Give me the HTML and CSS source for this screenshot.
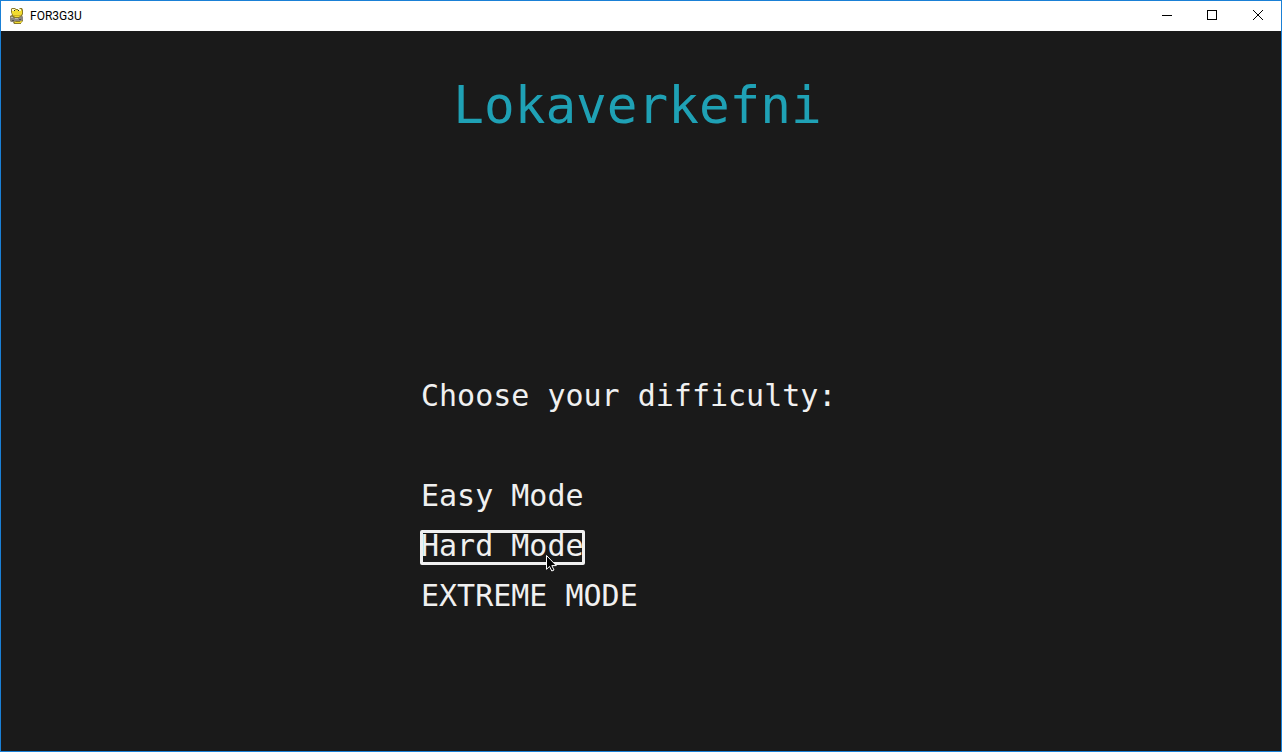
FILE: index.html
```html
<!DOCTYPE html>
<html lang="is">
<head>
<meta charset="utf-8">
<title>FOR3G3U</title>
<link rel="stylesheet" href="styles.css">
</head>
<body>
<div class="window">
  <header class="titlebar">
    <svg class="app-icon" viewBox="0 0 16 16" aria-hidden="true">
      <path fill="#8a7a2a" d="M3 0h3l1 1h3l1-1h2l1 2v4l-1 2 1 1v4l-2 2v1H5l-1-2H2l-1-2V8l2-1-1-3V1z"/>
      <path fill="#f2dc30" d="M3 1h3l1 1h3l1-1h1l1 2v3l-1 1-2 2H6L4 7 3 5zM5 13l2 1h4l1-2 1 1-1 2H6z"/>
      <path fill="#fff9c0" d="M3 1h3v2H3zM9 1h3v2H9z"/>
      <path fill="#2b2a20" d="M5 2h1v1H5zM9 2h1v1H9z"/>
      <path fill="#d3b022" d="M5 7h6v1H5z"/>
      <path fill="#8b8680" d="M1 9l2-1 2 2h5l2-2 2 1v3l-2 1H7l-3 1H2l-1-2z"/>
      <path fill="#bbb7b1" d="M2 9h2v1H2zM6 10h3v1H6z"/>
      <path fill="#55514c" d="M3 12h2v1H3zM10 11h2v1h-2z"/>
    </svg>
    <span class="caption">FOR3G3U</span>
    <div class="controls">
      <button class="control" type="button" aria-label="Minimize"><svg class="glyph" viewBox="0 0 11 11"><path d="M1 5.5h10"/></svg></button>
      <button class="control" type="button" aria-label="Maximize"><svg class="glyph" viewBox="0 0 11 11"><path d="M.5.5h9v9h-9z"/></svg></button>
      <button class="control" type="button" aria-label="Close"><svg class="glyph smooth" viewBox="0 0 11 11"><path d="M0 0l10 10M10 0L0 10"/></svg></button>
    </div>
  </header>
  <main class="screen">
    <h1 class="title">Lokaverkefni</h1>
    <section class="menu">
      <h2 class="prompt">Choose your difficulty:</h2>
      <button class="option" type="button">Easy Mode</button>
      <button class="option selected" type="button">Hard Mode
        <svg class="pointer" viewBox="0 0 12 19" aria-hidden="true"><path fill="#000" stroke="#fff" d="M.5.5v13.8l3-2.9 2.3 4.6 2.2-1-2.2-4.4h4.5z"/></svg>
      </button>
      <button class="option" type="button">EXTREME MODE</button>
    </section>
  </main>
</div>
</body>
</html>
```
FILE: styles.css
```css
* {
  box-sizing: border-box;
}

body {
  margin: 0;
}

.window {
  display: flex;
  flex-direction: column;
  min-height: 100vh;
  border: 1px solid #1a80d6;
  background: #1a1a1a;
}

.titlebar {
  display: flex;
  align-items: center;
  height: 30px;
  padding: 0 0 1px 8px;
  background: #fff;
}

.app-icon {
  width: 16px;
  height: 16px;
}

.caption {
  flex: 1;
  margin-left: 5px;
  font: 12px/16px Roboto, "Open Sans", sans-serif;
  color: #000;
}

.controls {
  display: flex;
  height: 100%;
}

.control {
  display: flex;
  align-items: center;
  justify-content: center;
  width: 46px;
  padding: 0;
  border: 0;
  background: none;
}

.glyph {
  width: 11px;
  height: 11px;
  fill: none;
  stroke: #000;
  shape-rendering: crispEdges;
}

.smooth {
  shape-rendering: auto;
}

.screen {
  flex: 1;
  font-family: "DejaVu Sans Mono", monospace;
}

.title {
  margin: 0;
  padding: 45px 7px 0 0;
  font-size: 51px;
  font-weight: 400;
  line-height: 60px;
  text-align: center;
  color: #1fa1b5;
}

.menu {
  display: flex;
  flex-direction: column;
  align-items: flex-start;
  gap: 17px;
  width: 440px;
  margin: 245px auto 0;
  color: #f0f0f0;
}

.prompt {
  margin: 0 0 50px;
  font-size: 30px;
  font-weight: 400;
  line-height: 29px;
  padding-bottom: 4px;
}

.option {
  position: relative;
  height: 33px;
  padding: 0 0 4px;
  border: 0;
  background: none;
  font: inherit;
  font-size: 30px;
  line-height: 29px;
  color: inherit;
}

.selected {
  outline: 3px solid #f0f0f0;
  outline-offset: -2px;
  border-radius: 1px;
}

.pointer {
  position: absolute;
  top: 24px;
  left: 125px;
  width: 12px;
  height: 19px;
}
```
